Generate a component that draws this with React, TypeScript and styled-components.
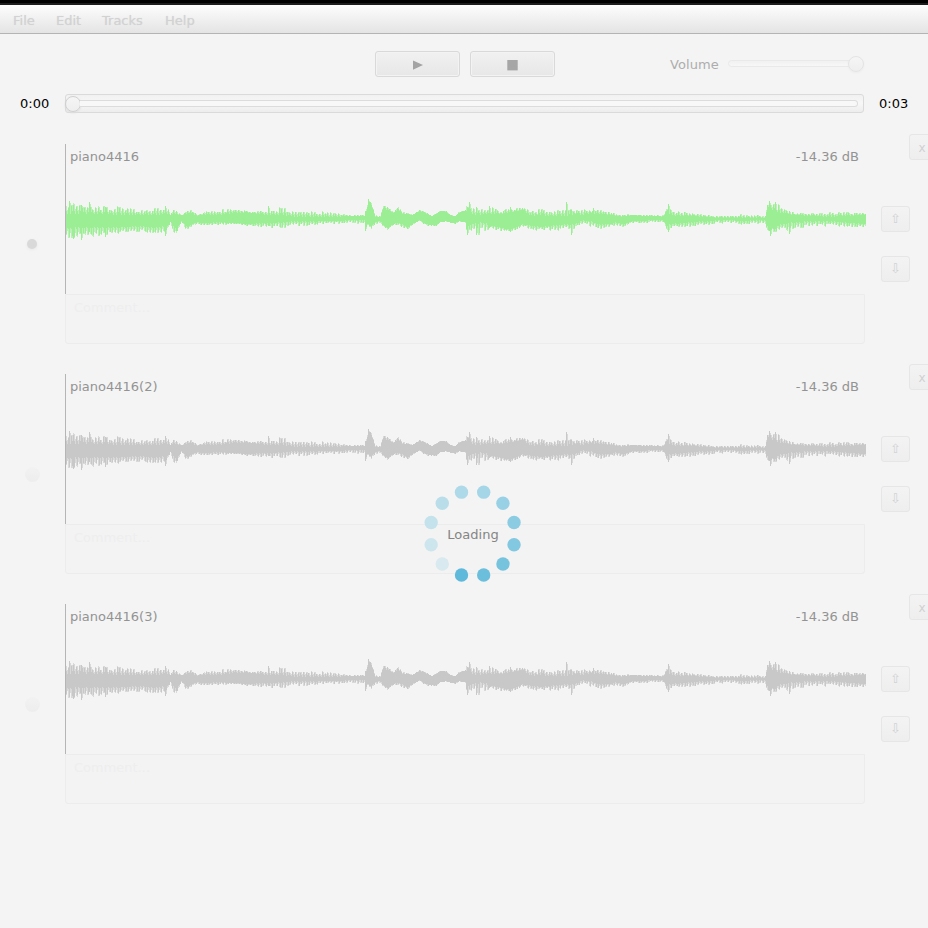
import React from "react";
import styled, { createGlobalStyle } from "styled-components";

const Global = createGlobalStyle`
  * { box-sizing: border-box; }
  html, body { margin: 0; height: 928px; overflow: hidden; background: #f4f4f4; }
  body { font-family: "DejaVu Sans", sans-serif; font-size: 13px; line-height: 16px; }
`;
const Window = styled.div`
  position: relative;
  width: 928px;
  height: 928px;
  overflow: hidden;
  background: #f4f4f4;
`;
const TitleEdge = styled.div`
  height: 5px;
  background: #000;
  border-bottom: 2px solid #1c1c1c;
`;
const MenuBar = styled.nav`
  height: 29px;
  display: flex;
  gap: 20px;
  padding: 8px 13px 0;
  color: #d2d2d2;
  text-shadow: 0 0 1px #d8d8d8;
  background: linear-gradient(#fdfdfd, #e4e4e4);
  border-bottom: 1px solid #b4b4b4;
`;
const MenuItem = styled.span<{ $w: number }>`
  width: ${(p) => p.$w}px;
  white-space: nowrap;
`;
const Transport = styled.div`
  height: 60px;
  display: flex;
  align-items: flex-start;
  padding: 17px 0 0 375px;
`;
const PlayButton = styled.button`
  width: 85px;
  height: 26px;
  margin: 0 10px 0 0;
  padding: 1px 0 0;
  display: flex;
  align-items: center;
  justify-content: center;
  border: 1px solid #d9d9d9;
  border-radius: 3px;
  background: linear-gradient(#f1f1f1, #e7e7e7);
  box-shadow: inset 0 0 0 1px #f3f3f3;
`;
const VolumeLabel = styled.span`
  width: 58px;
  margin: 6px 0 0 105px;
  color: #adadad;
  letter-spacing: 0.1px;
`;
const VolumeTrack = styled.div`
  width: 136px;
  height: 7px;
  margin-top: 9px;
  border: 1px solid #e9e9e9;
  border-radius: 4px;
  background: linear-gradient(#f1f1f1, #f7f7f7);
  display: flex;
  align-items: center;
  justify-content: flex-end;
`;
const Thumb = styled.div<{ $faint?: boolean }>`
  flex: none;
  width: 16px;
  height: 16px;
  margin: 0 -1px;
  border-radius: 50%;
  border: 1px solid ${(p) => (p.$faint ? "#e4e4e4" : "#d0d0d0")};
  background: linear-gradient(#f5f5f5, #eeeeee);
  box-shadow: 0 1px 2px ${(p) => (p.$faint ? "#ececec" : "#dddddd")};
`;
const SeekRow = styled.div`
  height: 40px;
  display: flex;
  align-items: flex-start;
  color: #000;
`;
const Time = styled.span<{ $w: number; $pad: number }>`
  width: ${(p) => p.$w}px;
  padding: 2px 0 0 ${(p) => p.$pad}px;
`;
const SeekBar = styled.div`
  width: 799px;
  height: 19px;
  display: flex;
  align-items: center;
  padding-right: 5px;
  border: 1px solid #dadada;
  border-radius: 3px;
  background: linear-gradient(#f1f1f1, #f7f7f7 50%, #ededed);
`;
const SeekTrack = styled.div`
  flex: 1;
  height: 7px;
  border: 1px solid #dcdcdc;
  border-left: 0;
  border-radius: 0 4px 4px 0;
  background: #f8f8f8;
`;
const TrackRow = styled.section`
  height: 230px;
  display: flex;
  align-items: flex-start;
`;
const RadioCell = styled.div`
  flex: none;
  width: 65px;
  padding-top: 102px;
  padding-left: 24px;
`;
const Radio = styled.div<{ $on: boolean }>`
  width: ${(p) => (p.$on ? 16 : 15)}px;
  height: ${(p) => (p.$on ? 16 : 15)}px;
  margin: ${(p) => (p.$on ? "0" : "1px 0 0 1px")};
  border-radius: 50%;
  display: grid;
  place-items: center;
  background: ${(p) => (p.$on ? "transparent" : "linear-gradient(#f2f2f2, #ededed)")};
  &::after {
    content: "";
    width: 10px;
    height: 10px;
    border-radius: 50%;
    background: ${(p) => (p.$on ? "#d9d9d9" : "transparent")};
    box-shadow: ${(p) => (p.$on ? "0 1px 3px #e8e8e8" : "none")};
  }
`;
const Body = styled.div`
  flex: none;
  width: 801px;
  margin-top: 10px;
`;
const WaveBox = styled.div`
  height: 150px;
  border-left: 1px solid #b5b5b5;
`;
const WaveHeader = styled.div`
  height: 25px;
  display: flex;
  justify-content: space-between;
  padding: 5px 7px 0 4px;
  color: #939393;
`;
const WaveSvg = styled.svg`
  display: block;
  width: 800px;
  height: 100px;
`;
const Comment = styled.div`
  width: 800px;
  height: 50px;
  padding: 5px 8px;
  border: 1px solid #ececec;
  border-radius: 0 0 3px 3px;
  background: #f3f3f3;
  color: #eeeeee;
`;
const MoveColumn = styled.div`
  flex: none;
  width: 43px;
  padding: 72px 0 0 15px;
  display: flex;
  flex-direction: column;
  gap: 24px;
`;
const SmallButton = styled.button`
  flex: none;
  width: 29px;
  height: 26px;
  padding: 0;
  font: 13px/24px "DejaVu Sans", sans-serif;
  color: #d2d2d5;
  border: 1px solid #e6e6e6;
  border-radius: 3px;
  background: linear-gradient(#f3f3f3, #eeeeee);
`;
const CloseButton = styled(SmallButton)`
  padding: 1px 3px 0 0;
  font-size: 12px;
  color: #d0d0d0;
`;
const LoadingOverlay = styled.div`
  position: absolute;
  left: 422px;
  top: 483px;
  width: 101px;
  height: 101px;
  display: grid;
  place-items: center;
  color: #858585;
  & > * { grid-area: 1 / 1; }
`;
const LoadingText = styled.span`
  padding: 3px 0 0 1px;
`;

// x, upper peak, lower peak, solid upper, solid lower (distances from the centre line)
const envelope = [
  [65, 14, 22, 8, 11], [67, 17, 20, 5, 9], [80, 16, 20, 5, 8], [90, 15, 18, 5, 8],
  [105, 13, 17, 5, 8], [120, 13, 16, 4, 8], [138, 11, 14, 4, 7], [155, 13, 15, 4, 8],
  [167, 13, 14, 5, 7], [170, 5, 5, 4, 3], [173, 12, 15, 5, 6], [176, 9, 17, 5, 11],
  [181, 4, 3, 3, 2], [187, 9, 13, 6, 8], [193, 10, 7, 5, 4], [197, 5, 6, 3, 3],
  [205, 9, 7, 4, 4], [220, 10, 6, 4, 3], [234, 11, 6, 6, 4], [248, 8, 7, 6, 5],
  [258, 8, 8, 5, 4], [268, 12, 11, 4, 4], [282, 12, 10, 4, 3], [295, 10, 8, 2, 2],
  [318, 8, 6, 2, 2], [335, 7, 5, 2, 2], [348, 4, 6, 3, 1], [364, 4, 6, 3, 1],
  [366, 11, 10, 7, 4], [368, 20, 6, 18, 5], [371, 16, 11, 14, 7], [375, 4, 6, 2, 3],
  [380, 3, 5, 2, 1], [383, 15, 9, 11, 6], [387, 13, 11, 9, 9], [393, 8, 7, 6, 5],
  [398, 13, 6, 9, 3], [402, 7, 9, 5, 5], [407, 7, 11, 5, 8], [412, 4, 6, 4, 5],
  [419, 9, 2, 8, 1], [426, 8, 7, 5, 5], [431, 3, 7, 3, 6], [436, 6, 7, 5, 6],
  [440, 9, 3, 8, 3], [446, 8, 3, 7, 2], [451, 4, 4, 3, 4], [455, 3, 5, 3, 4],
  [458, 7, 3, 6, 2], [465, 9, 4, 8, 3], [466, 15, 12, 6, 7], [471, 13, 14, 5, 5],
  [478, 12, 17, 4, 3], [485, 14, 12, 5, 4], [492, 12, 11, 5, 7], [500, 8, 13, 5, 8],
  [508, 11, 14, 6, 10], [516, 11, 11, 7, 8], [522, 12, 8, 9, 5], [530, 11, 11, 3, 6],
  [540, 11, 12, 4, 8], [548, 11, 12, 3, 7], [556, 9, 12, 3, 6], [566, 10, 11, 3, 5],
  [574, 12, 11, 5, 5], [582, 11, 7, 4, 1], [590, 9, 8, 6, 2], [598, 10, 11, 5, 5],
  [608, 8, 10, 4, 5], [616, 5, 7, 3, 3], [622, 5, 9, 2, 5], [632, 5, 4, 4, 2],
  [642, 4, 5, 3, 2], [651, 4, 4, 3, 1], [663, 4, 4, 2, 1], [666, 13, 13, 7, 6],
  [674, 11, 10, 3, 4], [681, 9, 10, 3, 4], [691, 6, 9, 3, 3], [706, 5, 7, 2, 2],
  [719, 3, 5, 1, 1], [730, 4, 5, 1, 1], [743, 6, 6, 1, 2], [756, 5, 5, 1, 1],
  [765, 4, 5, 1, 1], [767, 17, 13, 11, 6], [773, 16, 16, 9, 9], [778, 15, 13, 7, 6],
  [785, 10, 13, 5, 4], [794, 7, 12, 4, 3], [810, 6, 8, 3, 2], [827, 7, 8, 2, 2],
  [845, 7, 8, 3, 3], [865, 6, 9, 4, 5],
];
// Isolated peaks: x, upper, lower
const spikes = [
  [69, 18, 7], [73, 14, 20], [81, 14, 21], [89, 17, 13], [105, 12, 18],
  [165, 13, 17], [268, 13, 7], [365, 8, 12], [467, 12, 16], [469, 17, 8],
  [476, 12, 16], [489, 13, 9], [510, 12, 13], [519, 11, 9], [566, 17, 8],
  [571, 9, 16], [593, 11, 6], [668, 15, 13], [769, 18, 12], [770, 10, 17],
  [775, 17, 10], [789, 8, 15],
];
const noise = (n: number) => {
  const v = Math.sin(n * 91.7) * 4381.13;
  return v - Math.floor(v);
};
const buildWave = () => {
  let halo = "";
  let core = "";
  let seg = 0;
  for (let x = 66; x < 866; x++) {
    while (seg < envelope.length - 2 && x > envelope[seg + 1][0]) seg++;
    const a = envelope[seg];
    const b = envelope[seg + 1];
    const t = Math.min(1, (x - a[0]) / (b[0] - a[0]));
    const at = (i: number) => a[i] + (b[i] - a[i]) * t;
    // Columns pulse roughly every 2.7 px; each pulse has its own height.
    const pulse = Math.floor(x / 2.7);
    const phase = Math.floor(x % 2.7);
    const gainUp = 0.45 + noise(pulse) * 0.55;
    const gainDown = 0.45 + noise(pulse + 311) * 0.55;
    const upSpan = at(1) - at(3);
    const downSpan = at(2) - at(4);
    const up = at(3) + upSpan * gainUp * [0.85, 0.3, 0][phase];
    const down = at(4) + downSpan * gainDown * [0.15, 0.85, 0][phase];
    const softUp = at(3) + upSpan * gainUp * [1, 0.95, 0.5][phase];
    const softDown = at(4) + downSpan * gainDown * [0.95, 1, 0.5][phase];
    const px = x - 66;
    core += `M${px} ${Math.round(50 - up)}h1V${Math.round(50 + down)}h-1Z`;
    halo += `M${px} ${Math.round(50 - softUp)}h1V${Math.round(50 + softDown)}h-1Z`;
  }
  spikes.forEach(([x, u, d]) => {
    core += `M${x - 66} ${50 - u}h1V${50 + d}h-1Z`;
    halo += `M${x - 66} ${52 - u}h2V${48 + d}h-2Z`;
  });
  return { halo, core };
};
const wave = buildWave();

const tracks = [
  { name: "piano4416", on: true },
  { name: "piano4416(2)", on: false },
  { name: "piano4416(3)", on: false },
];

const Track = ({ name, on }: { name: string; on: boolean }) => {
  const color = on ? "#9bee93" : "#c8c8c8";
  return (
    <TrackRow>
      <RadioCell><Radio $on={on} /></RadioCell>
      <Body>
        <WaveBox>
          <WaveHeader><span>{name}</span><span>-14.36 dB</span></WaveHeader>
          <WaveSvg viewBox="0 0 800 100">
            <path d={wave.halo} fill={color} opacity={0.62} />
            <path d={wave.core} fill={color} />
          </WaveSvg>
        </WaveBox>
        <Comment>Comment...</Comment>
      </Body>
      <MoveColumn>
        <SmallButton>⇧</SmallButton>
        <SmallButton>⇩</SmallButton>
      </MoveColumn>
      <CloseButton>x</CloseButton>
    </TrackRow>
  );
};

const dotColors = [
  "#5fb9db", "#6bbedc", "#76c3de", "#82c8e0", "#8ccce2", "#98d1e5",
  "#a4d6e7", "#aed9e8", "#b9deea", "#c3e2ec", "#cde6ee", "#d8e9ef",
];

export default function App() {
  return (
    <>
      <Global />
      <Window>
        <TitleEdge />
        <MenuBar>
          <MenuItem $w={23}>File</MenuItem>
          <MenuItem $w={26}>Edit</MenuItem>
          <MenuItem $w={43}>Tracks</MenuItem>
          <MenuItem $w={30}>Help</MenuItem>
        </MenuBar>
        <Transport>
          <PlayButton>
            <svg width="12" height="12"><path d="M1 1.5L11 6L1 10.8Z" fill="#a3a3a3" /></svg>
          </PlayButton>
          <PlayButton>
            <svg width="12" height="12"><rect x="0.3" y="1" width="10.4" height="10.4" fill="#a6a6a6" /></svg>
          </PlayButton>
          <VolumeLabel>Volume</VolumeLabel>
          <VolumeTrack><Thumb $faint /></VolumeTrack>
        </Transport>
        <SeekRow>
          <Time $w={65} $pad={20}>0:00</Time>
          <SeekBar><Thumb /><SeekTrack /></SeekBar>
          <Time $w={64} $pad={15}>0:03</Time>
        </SeekRow>
        {tracks.map((t) => <Track key={t.name} {...t} />)}
        <LoadingOverlay>
          <svg width="101" height="101">
            {dotColors.map((c, i) => {
              const a = ((105 - i * 30) * Math.PI) / 180;
              return (
                <circle key={c} cx={50.6 + 42.9 * Math.cos(a)} cy={50.6 + 42.9 * Math.sin(a)} r={6.7} fill={c} />
              );
            })}
          </svg>
          <LoadingText>Loading</LoadingText>
        </LoadingOverlay>
      </Window>
    </>
  );
}
